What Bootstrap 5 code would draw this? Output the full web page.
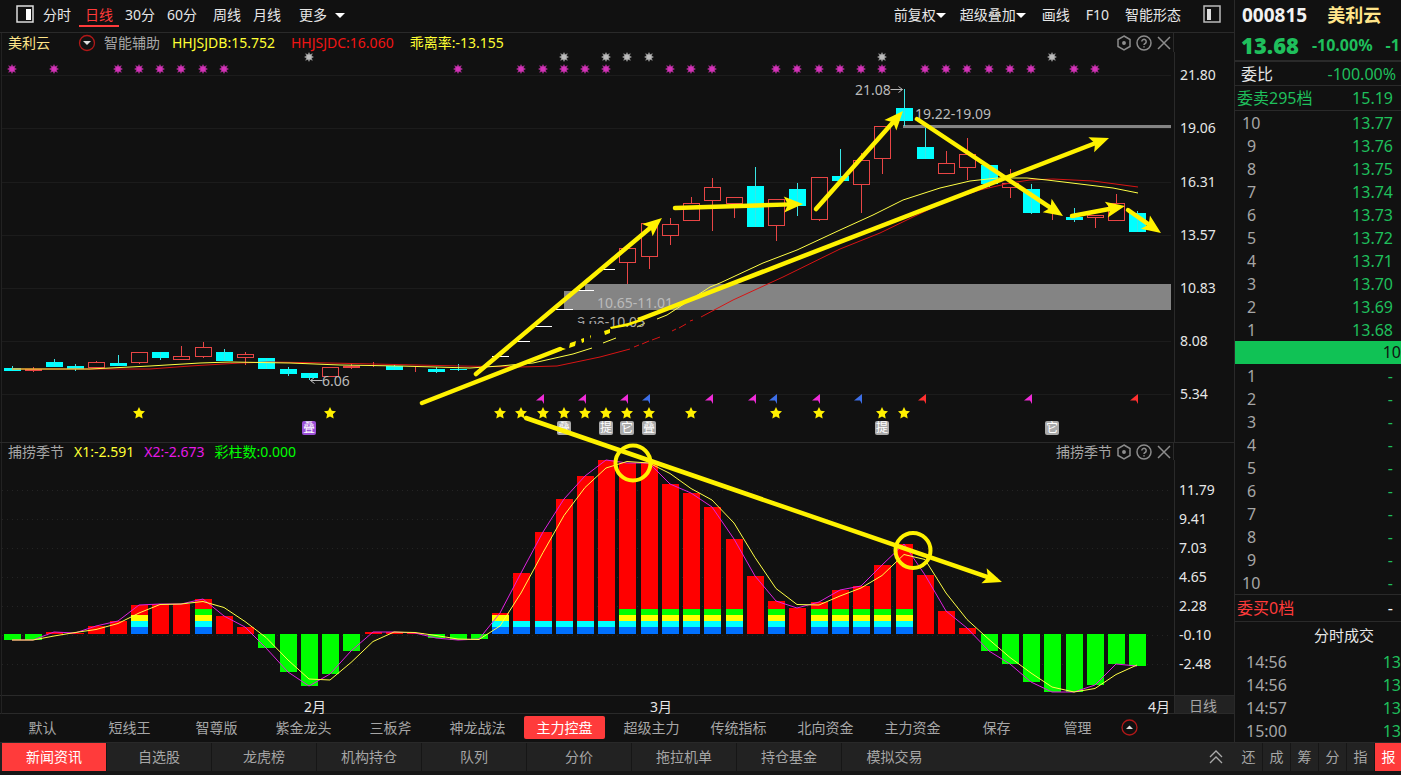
<!DOCTYPE html>
<html lang="zh-CN">
<head>
<meta charset="utf-8">
<meta name="viewport" content="width=device-width, initial-scale=1">
<title>美利云 000815</title>
<link href="https://cdn.jsdelivr.net/npm/bootstrap@5.3.0/dist/css/bootstrap.min.css" rel="stylesheet">
<style>
  :root { --bg:#111; --line:#2a2a2a; --mute:#a6a6a6; --hot:#ff3b3b; --down:#1fbf5c; }
  body { background:var(--bg); color:#e6e6e6; font:14px/20px "Noto Sans","Noto Sans CJK SC",sans-serif; overflow-x:hidden; }
  button { background:none; border:0; color:inherit; padding:0; white-space:nowrap; font:inherit; }
  svg { display:block; }
  .workspace { min-width:0; }
  .toolbar { height:33px; border-bottom:1px solid var(--line); padding:0 13px 3px 16px; }
  .toolbar button { height:22px; padding:0 6px; }
  .toolbar .period-on { color:var(--hot); border-bottom:2px solid var(--hot); height:22px; margin-top:2px; line-height:18px; }
  .caret { display:inline-block; border:5px solid transparent; border-top-color:#fff; border-bottom:0; vertical-align:2px; }
  .panel-head { color:var(--mute); white-space:nowrap; }
  .panel-head > div:first-child { border-right:1px solid var(--line); padding:0 2px 0 8px; }
  .panel-head > div:last-child { width:60px; }
  .head-main { height:19px; }
  .head-sub { height:18px; border-top:1px solid var(--line); line-height:17px; }
  .head-sub .reading { margin-right:10px; }
  .stock-name { color:#ffe58a; width:70px; }
  .c-yellow { color:#ff3; } .c-red { color:#f01414; } .c-pink { color:#e619e6; } .c-lime { color:#0f0; }
  .plot { width:100%; height:auto; overflow:visible; }
  .plot text { font-size:14px; }
  .drawings { position:absolute; left:0; top:0; width:100%; height:auto; pointer-events:none; }
  .templates { height:28px; gap:6px; color:var(--mute); padding-left:2px; padding-bottom:1px; }
  .templates button { width:81px; height:23px; }
  .templates .narrow { width:75px; }
  .templates .menu-up { width:17px; }
  .templates .template-on { background:var(--hot); color:#fff; border-radius:2px; }
  .quote { width:167px; border-left:1px solid var(--line); overflow:hidden; white-space:nowrap; font-size:16px; color:var(--mute); }
  .quote-id { height:30px; padding-left:7px; gap:20px; font-weight:700; font-size:19px; color:#f2f2f2; }
  .quote-id span:last-child { color:#ffe58a; font-size:18px; }
  .quote-last { height:30px; padding-left:6px; gap:13px; font-weight:700; color:var(--down); font-size:16px; }
  .quote-last b { font-size:22px; }
  .quote-ratio { height:26px; border-top:2px solid var(--line); border-bottom:1px solid var(--line); padding:0 5px 0 6px; color:#e6e6e6; }
  .quote-ask { height:25px; border-bottom:1px solid var(--line); padding:0 8px 0 2px; color:var(--down); }
  .quote-bid { height:28px; border:solid var(--line); border-width:1px 0; padding:0 8px 0 2px; color:var(--hot); }
  .quote table { width:100%; color:var(--mute); line-height:22px; table-layout:fixed; }
  .quote td { padding:1px 0 0; height:23px; }
  .quote td:first-child { padding-left:7px; }
  .quote td:last-child { padding-right:8px; text-align:right; color:var(--down); }
  .quote .one-digit td:first-child { padding-left:12px; }
  .quote .ticks td:first-child { padding-left:11px; }
  .quote .ticks td:last-child { padding-right:0; }
  .quote-gap { height:23px; background:#10c255; color:#111; text-align:right; line-height:23px; }
  .quote-title { height:28px; font-size:15px; line-height:27px; color:#e6e6e6; padding-left:79px; }
  .down { color:var(--down); }
  .footer-bar { background:#222; color:var(--mute); border-top:1px solid #292929; border-bottom:4px solid #161616; height:33px; padding-left:2px; }
  .footer-bar button { height:28px; border-right:1px solid #161616; }
  .news-tab { width:105px; }
  .side-tab { width:28px; flex-shrink:0; }
  .footer-bar .tab-on { background:var(--hot); color:#fff; }
  .side-tabs { width:166px; overflow:hidden; }
</style>
</head>
<body class="d-flex flex-column min-vh-100">
<div class="d-flex flex-grow-1">
  <main class="workspace flex-grow-1">
    <nav class="toolbar d-flex align-items-center" aria-label="周期">
      <svg width="19" height="19" viewBox="0 0 19 19" class="me-1 flex-shrink-0"><rect x="1" y="1" width="16" height="16" fill="none" stroke="#ddd" stroke-width="1.5"/><rect x="10" y="4" width="5" height="11" fill="#fff"/></svg>
      <button class="me-1 px-1">分时</button>
      <button class="period-on">日线</button>
      <button>30分</button><button>60分</button><button class="ms-1">周线</button><button>月线</button>
      <button class="ms-1 ps-2">更多 <span class="caret ms-1"></span></button>
      <span class="flex-grow-1"></span>
      <button class="px-1">前复权<span class="caret"></span></button>
      <button class="ms-1">超级叠加<span class="caret"></span></button>
      <button class="mx-1">画线</button><button>F10</button><button class="ms-1 me-3">智能形态</button>
      <svg width="18" height="19" viewBox="0 0 18 19" class="flex-shrink-0"><rect x="1" y="1" width="16" height="16" fill="none" stroke="#bbb" stroke-width="1.5"/><rect x="4" y="4" width="4" height="11" fill="#ddd"/></svg>
    </nav>
    <section class="position-relative">
      <div class="panel-head head-main d-flex">
        <div class="flex-grow-1 d-flex align-items-center">
          <span class="stock-name">美利云</span>
          <svg width="18" height="18" viewBox="0 0 18 18" class="me-1"><circle cx="9" cy="9" r="7.5" fill="none" stroke="#b01818" stroke-width="1.3"/><path d="M5 7h8l-4 4z" fill="#ddd"/></svg>
          <span class="me-2 ms-1">智能辅助</span>
          <span class="c-yellow me-3 ps-1">HHJSJDB:15.752</span>
          <span class="c-red me-3">HHJSJDC:16.060</span>
          <span class="c-yellow flex-grow-1">乖离率:-13.155</span>
          <svg width="55" height="18" class="tools"><use href="#tools"/></svg>
        </div>
        <div></div>
      </div>
      <svg class="plot" id="price" viewBox="0 52 1234 390" font-family="Noto Sans, Noto Sans CJK SC, sans-serif"></svg>
      <div class="panel-head head-sub d-flex">
        <div class="flex-grow-1 d-flex align-items-center">
          <span class="reading">捕捞季节</span>
          <span class="c-yellow reading">X1:-2.591</span>
          <span class="c-pink reading">X2:-2.673</span>
          <span class="c-lime flex-grow-1">彩柱数:0.000</span>
          <span class="me-1">捕捞季节</span>
          <svg width="55" height="17" class="tools"><use href="#tools"/></svg>
        </div>
        <div></div>
      </div>
      <svg class="plot" id="season" viewBox="0 460 1234 254" font-family="Noto Sans, Noto Sans CJK SC, sans-serif"></svg>
      <svg class="drawings" id="drawings" viewBox="0 33 1234 681"></svg>
    </section>
    <nav class="templates d-flex align-items-center" aria-label="指标模板">
      <button>默认</button><button>短线王</button><button>智尊版</button><button>紫金龙头</button><button>三板斧</button><button>神龙战法</button><button class="template-on">主力控盘</button><button>超级主力</button><button>传统指标</button><button>北向资金</button><button>主力资金</button><button class="narrow">保存</button><button class="narrow">管理</button>
      <button class="menu-up" aria-label="展开"><svg width="17" height="17" viewBox="0 0 17 17"><circle cx="8.500" cy="8.500" r="7.500" fill="none" stroke="#b01818" stroke-width="1.300"/><path d="M5 10h7l-3.500-3.500z" fill="#ddd"/></svg></button>
    </nav>
  </main>
  <aside class="quote flex-shrink-0">
    <div class="quote-id d-flex align-items-center"><span>000815</span><span>美利云</span></div>
    <div class="quote-last d-flex align-items-center"><b>13.68</b><span>-10.00%</span><span>-1</span></div>
    <div class="quote-ratio d-flex align-items-center justify-content-between"><span>委比</span><span class="down">-100.00%</span></div>
    <div class="quote-ask d-flex align-items-center justify-content-between"><span>委卖295档</span><span>15.19</span></div>
    <table><tbody id="asks"></tbody></table>
    <div class="quote-gap">10</div>
    <table><tbody id="bids"></tbody></table>
    <div class="quote-bid d-flex align-items-center justify-content-between"><span>委买0档</span><span class="text-light">-</span></div>
    <div class="quote-title">分时成交</div>
    <table class="ticks"><tbody>
      <tr><td>14:56</td><td>13</td></tr><tr><td>14:56</td><td>13</td></tr><tr><td>14:57</td><td>13</td></tr><tr><td>15:00</td><td>13</td></tr>
    </tbody></table>
  </aside>
</div>
<footer class="footer-bar d-flex">
  <button class="news-tab tab-on">新闻资讯</button><button class="news-tab">自选股</button><button class="news-tab">龙虎榜</button><button class="news-tab">机构持仓</button><button class="news-tab">队列</button><button class="news-tab">分价</button><button class="news-tab">拖拉机单</button><button class="news-tab">持仓基金</button><button class="news-tab border-0">模拟交易</button>
  <span class="flex-grow-1"></span>
  <button class="border-0 px-2 me-1" aria-label="展开"><svg width="14" height="16" viewBox="0 0 14 16" fill="none" stroke="#aaa" stroke-width="1.300"><path d="M1 8l6-6 6 6M1 14l6-6 6 6"/></svg></button>
  <div class="side-tabs d-flex"><button class="side-tab">还</button><button class="side-tab">成</button><button class="side-tab">筹</button><button class="side-tab">分</button><button class="side-tab">指</button><button class="side-tab tab-on">报</button></div>
</footer>
<svg width="0" height="0" class="position-absolute"><defs>
  <g id="tools" fill="none" stroke="#8c8c8c" stroke-width="1.500">
    <path d="M8 2l6 3.500v7L8 16l-6-3.500v-7z"/><circle cx="8" cy="9" r="1.200" fill="#aaa"/>
    <circle cx="28" cy="9" r="7"/><path d="M25.800 7.500a2.200 2.200 0 1 1 3.300 2c-.8.400-1.100.8-1.100 1.500M28 12.200v1.300"/>
    <path d="M42 3l12 12M54 3L42 15"/>
  </g>
</defs></svg>
<script src="https://cdn.jsdelivr.net/npm/bootstrap@5.3.0/dist/js/bootstrap.bundle.min.js"></script>
<script>
const rows = (id, row) => {
  let h = '';
  for (let n = 10; n > 0; n--) h += row(n);
  document.getElementById(id).innerHTML = h;
};
rows('asks', n => `<tr class="${n < 10 ? 'one-digit' : ''}"><td>${n}</td><td>${(13.67 + n / 100).toFixed(2)}</td></tr>`);
rows('bids', n => `<tr class="${n > 1 ? 'one-digit' : ''}"><td>${11 - n}</td><td>-</td></tr>`);

const X = i => Math.floor(12 + i * 21.24);
const line = (x1, y1, x2, y2, c, extra = '') => `<line x1="${x1}" y1="${y1}" x2="${x2}" y2="${y2}" stroke="${c}" ${extra}/>`;
const rect = (x, y, w, h, c) => `<rect x="${x}" y="${y}" width="${w}" height="${h}" fill="${c}"/>`;
const text = (x, y, s, c, extra = '') => `<text x="${x}" y="${y}" fill="${c}" ${extra}>${s}</text>`;
const poly = (p, c, w = 1) => `<polyline points="${p}" fill="none" stroke="${c}" stroke-width="${w}"/>`;

/* price panel: [kind, body top, body bottom, wick top, wick bottom]; kind 0 falls, 1 rises, 2 is a flat limit-up day */
const candles = [
 [0,368,371,366,371],[1,369,370,367,372],[0,362,367,359,367],[0,366,369,364,371],[1,362,367,361,367],[0,363,366,355,366],
 [1,352,362,352,364],[0,352,358,352,360],[1,356,359,346,360],[1,347,356,342,358],[0,352,361,349,361],[1,354,357,352,365],
 [0,358,369,358,369],[0,369,374,367,376],[0,373,378,373,380],[1,367,376,367,376],[1,366,367,364,369],[1,365,365,362,367],
 [0,366,370,364,370],[1,368,368,366,372],[0,369,372,367,373],[0,369,370,364,371],[1,369,369,368,371],
 [2,356],[2,341],[2,326],[2,309],[2,290],[2,269],
 [1,248,262,248,284],[1,223,256,223,269],[1,224,235,218,245],[1,203,220,197,220],[1,187,200,178,231],[1,197,203,197,218],
 [0,186,227,167,227],[1,199,225,199,241],[0,189,206,183,216],[1,177,219,177,221],[0,176,181,149,181],[1,160,184,153,213],
 [1,126,158,126,174],[0,108,121,89,126],[0,147,159,128,159],[1,163,173,151,173],[1,154,167,138,180],[0,165,184,165,187],
 [1,183,187,169,198],[0,189,213,184,214],[1,213,213,213,220],[0,217,220,208,222],[1,215,217,215,228],[1,203,220,194,220],[0,213,232,211,232]];
let p = '';
[75,128,182,235,288,341,394].forEach((y, k) => {
  p += line(2, y + .5, 1171, y + .5, '#1c1c1c');
  p += text(1180, y + 5, ['21.80','19.06','16.31','13.57','10.83','8.08','5.34'][k], '#e6e6e6');
});
p += line(1.5, 33, 1.5, 442, '#222') + line(1174.5, 52, 1174.5, 442, '#2a2a2a');
p += '<path d="M564 291h21v-7h586v26H564z" fill="#848484"/>' + rect(903, 125, 268, 3, '#848484');
candles.forEach(([k, t, b, h, l], i) => {
  const x = X(i);
  if (k === 2) p += rect(x - 8, t, 17, 1, '#fff');
  else if (k === 0) p += rect(x - 8, t, 17, b - t, '#0ff') + rect(x, h, 1, l - h, '#39e6e6');
  else {
    p += line(x + .5, h, x + .5, t, '#e84545') + line(x + .5, b, x + .5, l, '#e84545');
    p += `<rect x="${x - 7.5}" y="${t + .5}" width="16" height="${Math.max(0, b - t)}" fill="none" stroke="#e84545"/>`;
  }
});
p += poly('12,369 150,369 190,366 240,363 270,362 330,363 460,366 520,367 557,366 600,357 630,349', '#d81414');
p += '<path d="M634 347l5-2m3-1l7-3m3-1l8-3m12-6l4-2m3-1l7-4m4-3l3-1" stroke="#d81414" fill="none"/>';
p += poly('701,317 733,300 783,277 840,249 880,233 913,217 947,201 980,190 1010,183 1030,180 1053,179 1093,181 1138,187', '#d81414');
p += poly('12,369 90,369 150,366 200,363 230,362 290,363 340,365 400,366 470,368 500,366 533,363 573,354 592,348', '#ffff45');
p += '<path d="M603 343l13-5m21-11l8-4" stroke="#ffff45"/>';
p += poly('657,319 667,315 710,287 720,283 763,263 797,250 840,230 873,215 903,200 940,188 970,181 997,178 1027,178 1047,180 1113,188 1138,193', '#ffff45');
p += text(855, 95, '21.08', '#bbb') + '<path d="M890.500 89.500h12m-4-3l4 3-4 3M322.500 380.500h-12m4-3l-4 3 4 3" stroke="#bbb" fill="none"/>';
p += text(915, 119, '19.22-19.09', '#bbb') + text(322, 386, '6.06', '#bbb') + text(597, 308, '10.65-11.01', '#bbb');
p += text(577, 327, '9.68-10.05', '#a8a8a8') + rect(574, 319, 36, 2, '#111') + rect(574, 324, 36, 4, '#111');
const spark = (x, y, c) => `<path d="M${x} ${y-5}l1.200 2.200 2.600-1-1 2.600 2.200 1.200-2.200 1.200 1 2.600-2.600-1-1.200 2.200-1.200-2.200-2.600 1 1-2.600-2.200-1.200 2.200-1.200-1-2.600 2.600 1z" fill="${c}" fill-opacity=".75"/><circle cx="${x}" cy="${y}" r="2.500" fill="${c}"/>`;
[0,2,5,6,7,8,9,10,21,24,25,26,27,28,31,32,33,36,37,38,39,40,41,43,44,45,46,47,48,50,51].forEach(i => p += spark(X(i), 69, '#d433b8'));
[14,26,28,29,30,41,49].forEach(i => p += spark(X(i), 57, '#bbb'));
[6,15,23,24,25,26,27,28,29,30,32,36,38,41,42].forEach(i => {
  p += `<path transform="translate(${X(i)} 413)" d="M0-6l1.800 3.800 4.200.5-3.100 2.900.8 4.300L0 3.500-3.700 5.500l.8-4.300L-6-1.700l4.200-.5z" fill="#fff000"/>`;
});
const flags = { '#f02bd8':[25,27,29,33,35,38,48], '#3d6fe8':[30,36,40], '#ff3030':[43,53] };
for (const c in flags) flags[c].forEach(i => p += `<path transform="translate(${X(i)} 399)" d="M1-5v10l-2-3.500-6 0z" fill="${c}"/>`);
[[14,'叠'],[26,'叠'],[28,'提'],[29,'它'],[30,'叠'],[41,'提'],[49,'它']].forEach(([i, s], k) => {
  p += `<rect x="${X(i) - 7}" y="421" width="14" height="14" rx="2" fill="${k ? '#aaa' : '#9a4fd6'}"/>` + `<text x="${X(i)}" y="432" fill="#fff" text-anchor="middle" style="font-size:12px">${s}</text>`;
});
document.getElementById('price').innerHTML = p;

/* season panel: bar ends measured from the zero line at 634, and the number of coloured bands */
const ends = [640,640,632,633,626,621,605,604,604,599,616,627,648,672,686,674,651,632,632,633,638,640,639,613,573,532,499,476,460,463,463,484,493,507,539,576,601,608,602,590,586,565,544,575,611,628,651,664,682,692,692,685,664,666];
const bands = {6:3,9:4,23:3,24:2,25:2,26:2,27:2,28:2,29:4,30:4,31:4,32:4,33:4,34:4,36:4,38:4,39:4,40:4,41:4,42:4};
let s = '';
[490,519,548,577,606,635,664].forEach((y, k) => {
  s += line(2, y + .5, 1171, y + .5, '#242424', 'stroke-dasharray="1 4"');
  s += text(1179, y + 5, ['11.79','9.41','7.03','4.65','2.28','-0.10','-2.48'][k], '#e6e6e6');
});
ends.forEach((y, i) => {
  const x = X(i) - 8;
  s += y > 634 ? rect(x, 634, 17, y - 634, '#0f0') : rect(x, y, 17, 634 - y, '#f00');
  [[627,7,'#0070ff'],[621,6,'#0ff'],[615,6,'#ff0'],[609,6,'#0f0']].slice(0, bands[i] || 0).forEach(([t, h, c]) => s += rect(x, t, 17, h, c));
});
s += poly(ends.map((y, i) => `${X(i)},${y}`).join(' '), '#e020e0');
s += poly(ends.map((y, i) => `${X(i)},${(y + ends[Math.max(0, i - 1)]) / 2}`).join(' '), '#ffff45');
s += rect(1175, 696, 59, 18, '#222') + line(0, 695.5, 1234, 695.5, '#2a2a2a') + line(0, 713.5, 1234, 713.5, '#2a2a2a');
s += line(1.5, 443, 1.5, 714, '#222') + line(1174.5, 460, 1174.5, 714, '#2a2a2a');
s += text(304, 712, '2月', '#e6e6e6') + text(650, 712, '3月', '#e6e6e6') + text(1148, 712, '4月', '#e6e6e6') + text(1189, 711, '日线', '#a6a6a6');
document.getElementById('season').innerHTML = s;

/* hand-drawn trend arrows and circles */
const arrow = (x1, y1, x2, y2, stem = true) => {
  const a = Math.atan2(y2 - y1, x2 - x1), d = 12;
  return (stem ? line(x1, y1, x2 - d * Math.cos(a), y2 - d * Math.sin(a), '#fff200', 'stroke-width="4.500" stroke-linecap="round"') : '') +
    `<path transform="translate(${x2} ${y2}) rotate(${a * 180 / Math.PI})" d="M0 0L-19-8-15 0-19 8z" fill="#fff200"/>`;
};
let d = arrow(476,374,662,218) + arrow(675,208,803,204) + arrow(816,209,903,111) + arrow(917,119,1063,216)
  + arrow(1072,216,1125,206) + arrow(1128,210,1161,233) + arrow(526,418,1002,582) + arrow(422,403,1109,138,false);
d += line(422, 403, 560, 349, '#fff200', 'stroke-width="4.500" stroke-linecap="round"') + line(638, 320, 1097, 142.500, '#fff200', 'stroke-width="4.500"');
d += '<path d="M560 347l6 2-6 2zM570 343l6-2-1 5-6 2zM581 339l3-1v4l-2 1zM590 336l1-1v4zM604 331l6-2v4l-5 2zM610 327l18-4 12-4 2 2-14 5-17 3z" fill="#fff200"/>';
d += '<g fill="none" stroke="#fff200" stroke-width="4"><circle cx="633" cy="463" r="17.500"/><circle cx="913" cy="550.500" r="17.500"/></g>';
document.getElementById('drawings').innerHTML = d;
</script>
</body>
</html>
